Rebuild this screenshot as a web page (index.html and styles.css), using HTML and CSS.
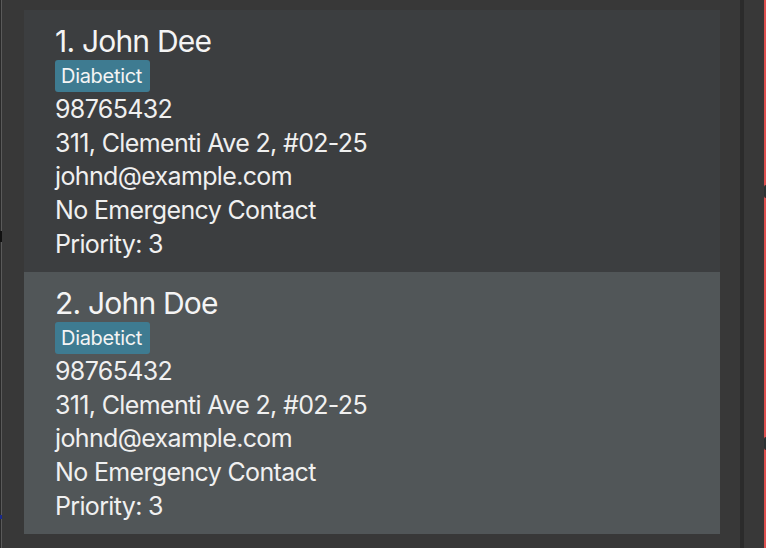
FILE: index.html
```html
<!DOCTYPE html>
<html lang="en">
<head>
<meta charset="utf-8">
<title>Patient list</title>
<link rel="stylesheet" href="styles.css">
</head>
<body>
<div class="window">
  <div class="edge-left">
    <span class="mark mark-dark"></span>
    <span class="mark mark-blue"></span>
  </div>
  <div class="list">
    <div class="card card-odd">
      <div class="name">1. John Dee</div>
      <div class="tags"><span class="tag">Diabetict</span></div>
      <div class="field">98765432</div>
      <div class="field">311, Clementi Ave 2, #02-25</div>
      <div class="field">johnd@example.com</div>
      <div class="field">No Emergency Contact</div>
      <div class="field">Priority: 3</div>
    </div>
    <div class="card card-even">
      <div class="name">2. John Doe</div>
      <div class="tags"><span class="tag">Diabetict</span></div>
      <div class="field">98765432</div>
      <div class="field">311, Clementi Ave 2, #02-25</div>
      <div class="field">johnd@example.com</div>
      <div class="field">No Emergency Contact</div>
      <div class="field">Priority: 3</div>
    </div>
  </div>
  <div class="divider"></div>
  <div class="pane"></div>
  <div class="edge-right">
    <span class="notch notch-1"></span>
    <span class="notch notch-2"></span>
  </div>
</div>
</body>
</html>
```

FILE: styles.css
```css
html, body {
  margin: 0;
  padding: 0;
  background: #383838;
}

body {
  font-family: Inter, "Open Sans", "Liberation Sans", sans-serif;
  color: #f0f0f0;
}

.window {
  display: flex;
  height: 548px;
  width: 766px;
  overflow: hidden;
}

.edge-left {
  position: relative;
  width: 1px;
  border-left: 1px solid #2a2a2a;
  background: #5a5a5a;
  flex: none;
}

.mark {
  position: absolute;
  left: -1px;
  width: 2px;
}

.mark-dark {
  top: 231px;
  height: 11px;
  background: #111111;
}

.mark-blue {
  top: 515px;
  height: 4px;
  background: #1b2a8a;
}

.list {
  flex: none;
  width: 696px;
  padding: 10px 20px 0 22px;
  display: flex;
  flex-direction: column;
}

.card {
  box-sizing: border-box;
  height: 262px;
  padding: 13px 0 0 31px;
}

.card-odd {
  background: #3c3e40;
}

.card-even {
  background: #515658;
}

.name {
  font-size: 30px;
  line-height: 36px;
  letter-spacing: -0.8px;
  color: #f4f4f4;
}

.tags {
  display: flex;
  margin: 1px 0 1px;
}

.tag {
  box-sizing: border-box;
  height: 32px;
  width: 95px;
  padding: 0 0 0 6px;
  border-radius: 3px;
  background: #3e7b91;
  color: #f4f4f4;
  font-size: 20px;
  line-height: 32px;
  letter-spacing: -0.3px;
}

.field {
  font-size: 25px;
  line-height: 33.7px;
  letter-spacing: -0.65px;
}

.divider {
  flex: none;
  width: 4px;
  background: #2b2b2b;
}

.pane {
  flex: none;
  width: 20px;
  background: #383838;
}

.edge-right {
  position: relative;
  flex: none;
  width: 2px;
  background: #e05050;
}

.notch {
  position: absolute;
  left: 0;
  width: 2px;
  height: 13px;
  border-radius: 6px 0 0 6px;
  background: #2e3133;
}

.notch-1 {
  top: 185px;
}

.notch-2 {
  top: 437px;
}
```
